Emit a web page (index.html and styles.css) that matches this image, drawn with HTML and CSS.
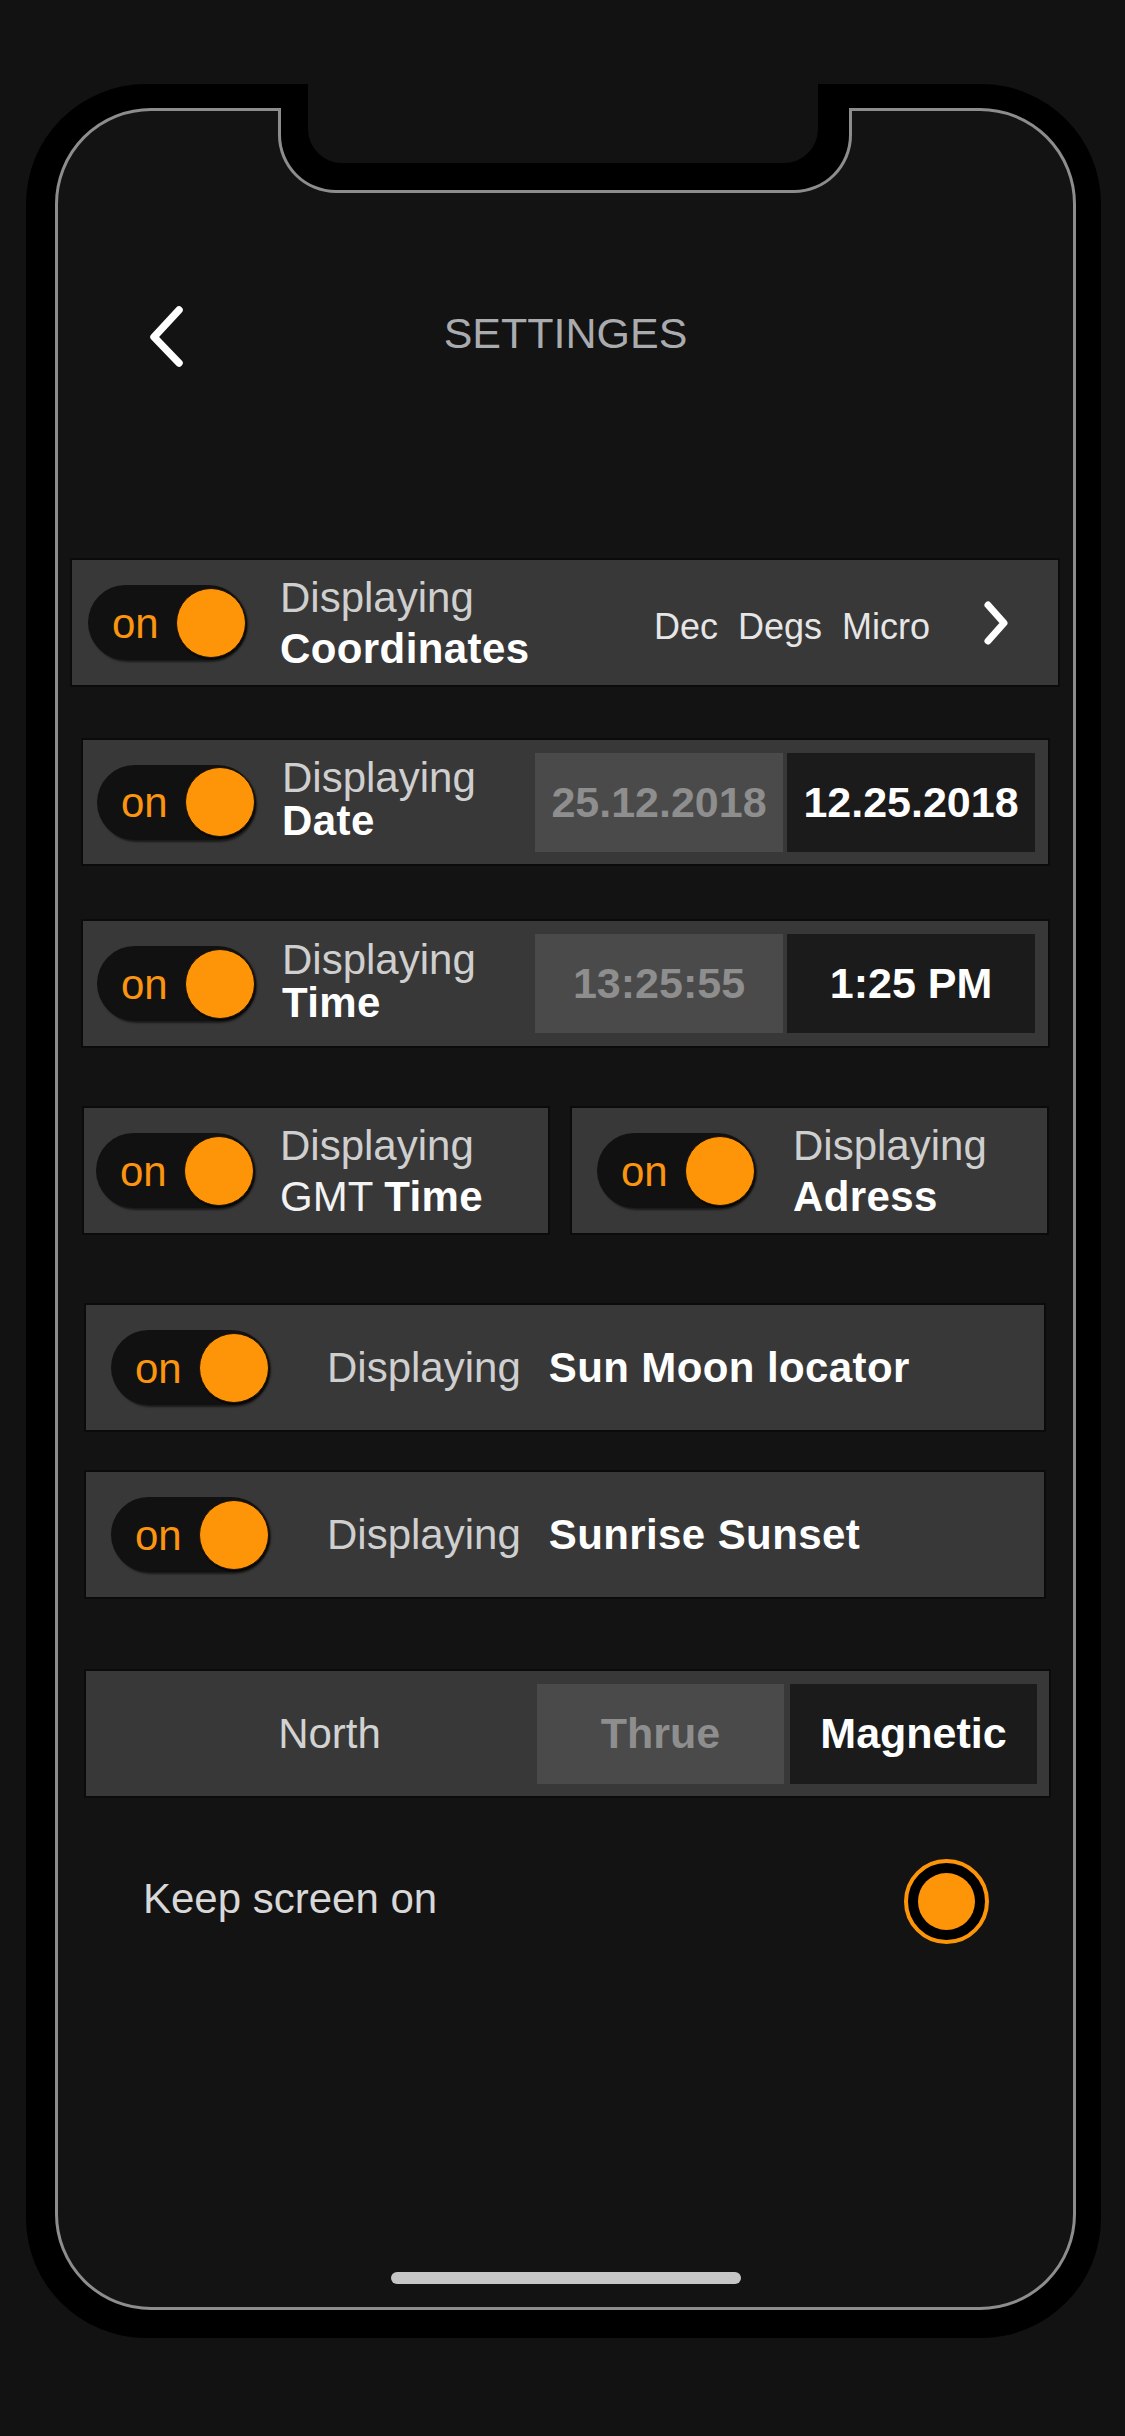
FILE: index.html
```html
<!DOCTYPE html>
<html lang="en">
<head>
<meta charset="utf-8">
<title>Settinges</title>
<link rel="stylesheet" href="styles.css">
</head>
<body>
<div class="device">
  <div class="screen">
    <div class="notch"><div class="notch-cut"></div></div>

    <header class="header">
      <svg class="back" width="40" height="64" viewBox="0 0 40 64" aria-label="Back">
        <path d="M34 6 L9 33 L34 59" fill="none" stroke="#ffffff" stroke-width="7.5" stroke-linecap="round" stroke-linejoin="round"/>
      </svg>
      <h1 class="title">SETTINGES</h1>
      <span></span>
    </header>

    <div class="card row-coords">
      <div class="toggle"><span class="on">on</span><span class="knob"></span></div>
      <div class="label label-tall lbl-coords"><span class="light">Displaying</span><span class="bold">Coordinates</span></div>
      <div class="units"><span>Dec</span><span>Degs</span><span>Micro</span></div>
      <svg class="chev" width="30" height="46" viewBox="0 0 30 46" aria-label="More">
        <path d="M7 5 L23 23 L7 41" fill="none" stroke="#ffffff" stroke-width="7" stroke-linecap="round" stroke-linejoin="round"/>
      </svg>
    </div>

    <div class="card row-date">
      <div class="toggle"><span class="on">on</span><span class="knob"></span></div>
      <div class="label label-short lbl-date"><span class="light">Displaying</span><span class="bold">Date</span></div>
      <div class="segs">
        <div class="seg seg-dim">25.12.2018</div>
        <div class="seg seg-on">12.25.2018</div>
      </div>
    </div>

    <div class="card row-time">
      <div class="toggle"><span class="on">on</span><span class="knob"></span></div>
      <div class="label label-short lbl-date"><span class="light">Displaying</span><span class="bold">Time</span></div>
      <div class="segs">
        <div class="seg seg-dim">13:25:55</div>
        <div class="seg seg-on">1:25 PM</div>
      </div>
    </div>

    <div class="pair">
      <div class="card row-gmt">
        <div class="toggle"><span class="on">on</span><span class="knob"></span></div>
        <div class="label label-tall lbl-gmt"><span class="light">Displaying</span><span class="white">GMT <b class="bold">Time</b></span></div>
      </div>
      <div class="card row-addr">
        <div class="toggle"><span class="on">on</span><span class="knob"></span></div>
        <div class="label label-tall lbl-addr"><span class="light">Displaying</span><span class="bold">Adress</span></div>
      </div>
    </div>

    <div class="card row-wide row-sun">
      <div class="toggle"><span class="on">on</span><span class="knob"></span></div>
      <div class="inline-label"><span class="light">Displaying</span><span class="bold">Sun Moon locator</span></div>
    </div>

    <div class="card row-wide row-rise">
      <div class="toggle"><span class="on">on</span><span class="knob"></span></div>
      <div class="inline-label"><span class="light">Displaying</span><span class="bold">Sunrise Sunset</span></div>
    </div>

    <div class="card row-north">
      <div class="north">North</div>
      <div class="segs segs-north">
        <div class="seg seg-dim">Thrue</div>
        <div class="seg seg-on">Magnetic</div>
      </div>
    </div>

    <div class="keep">
      <span class="keep-text">Keep screen on</span>
      <span class="radio"><span class="radio-dot"></span></span>
    </div>

    <div class="home"></div>
  </div>
</div>
</body>
</html>
```

FILE: styles.css
```css
* {
  box-sizing: border-box;
}

body {
  margin: 0;
  width: 1125px;
  height: 2436px;
  overflow: hidden;
  background: #121212;
  font-family: "Liberation Sans", Arial, Helvetica, sans-serif;
}

/* ---------- device frame ---------- */
.device {
  margin: 84px 0 0 26px;
  width: 1075px;
  height: 2254px;
  background: #000;
  border-radius: 120px;
  padding: 24px 25px 28px 29px;
}

.screen {
  position: relative;
  height: 100%;
  border: 3px solid #8d8d8d;
  border-radius: 96px;
  background: #131313;
  display: flex;
  flex-direction: column;
}

.notch {
  position: absolute;
  left: 220px;
  top: -3px;
  width: 574px;
  height: 85px;
  background: #000;
  border: 3px solid #8d8d8d;
  border-top: 0;
  border-radius: 0 0 58px 58px;
}

.notch-cut {
  position: absolute;
  left: 27px;
  top: -24px;
  width: 510px;
  height: 79px;
  background: #121212;
  border-radius: 0 0 34px 34px;
}

/* ---------- header ---------- */
.header {
  display: grid;
  grid-template-columns: 1fr auto 1fr;
  align-items: center;
  height: 64px;
  margin-top: 193px;
  flex-shrink: 0;
}

.back {
  display: block;
  margin-left: 87px;
}

.title {
  margin: 0 0 6px;
  font-size: 43px;
  font-weight: 400;
  color: #a9abae;
  line-height: normal;
}

/* ---------- cards ---------- */
.card {
  display: flex;
  align-items: center;
  height: 125px;
  background: #383838;
  box-shadow: 0 0 0 2px #0b0b0b;
  flex-shrink: 0;
}

.toggle {
  width: 158px;
  height: 75px;
  flex-shrink: 0;
  border-radius: 38px;
  background: #111;
  box-shadow: 2px 2px 2px rgba(0, 0, 0, 0.55);
  display: flex;
  align-items: center;
  justify-content: space-between;
  padding: 0 0 0 24px;
}

.on {
  color: #fb950f;
  font-size: 42px;
  line-height: 1;
  padding-top: 2px;
}

.knob {
  width: 70px;
  height: 70px;
  border-radius: 50%;
  background: #fe9508;
  border: 1.5px solid #1c1205;
  box-shadow: 1px 2px 1px rgba(0, 0, 0, 0.6);
}

.label {
  display: flex;
  flex-direction: column;
  font-size: 42px;
}

.label-tall {
  line-height: 51px;
}

.label-short {
  line-height: 43px;
  padding-bottom: 6px;
}

.light {
  color: #cfcfcf;
}

.white {
  color: #f2f2f2;
}

.bold {
  color: #fff;
  font-weight: 700;
  letter-spacing: 0.4px;
}

/* row 1 */
.row-coords {
  margin: 192px 0 0 14px;
  width: 986px;
  padding-left: 16px;
}

.lbl-coords {
  margin-left: 34px;
}

.units {
  display: flex;
  gap: 20px;
  margin-left: auto;
  padding-top: 8px;
  font-size: 36px;
  color: #e6e6e6;
}

.chev {
  display: block;
  margin: 0 47px 0 51px;
}

/* rows 2,3 */
.row-date {
  margin: 55px 0 0 25px;
  width: 965px;
  height: 124px;
  padding: 0 13px 0 14px;
}

.row-time {
  margin: 57px 0 0 25px;
  width: 965px;
  padding: 0 13px 0 14px;
}

.lbl-date {
  margin-left: 27px;
}

.segs {
  display: flex;
  gap: 4px;
  margin-left: auto;
  height: 99px;
}

.seg {
  width: 248px;
  display: flex;
  align-items: center;
  justify-content: center;
  font-size: 43px;
  font-weight: 700;
}

.seg-dim {
  background: #4a4a4a;
  color: #8e8e8e;
}

.seg-on {
  background: #1b1b1b;
  color: #fff;
}

/* row 4 */
.pair {
  display: grid;
  grid-template-columns: 464px 475px;
  gap: 24px;
  margin: 62px 0 0 26px;
  flex-shrink: 0;
}

.row-gmt {
  padding-left: 12px;
}

.lbl-gmt {
  margin-left: 26px;
}

.row-addr {
  padding-left: 25px;
}

.lbl-addr {
  margin-left: 38px;
}

/* rows 5,6 */
.row-wide {
  margin-left: 28px;
  width: 958px;
  padding-left: 25px;
}

.row-sun {
  margin-top: 72px;
}

.row-rise {
  margin-top: 42px;
}

.inline-label {
  display: flex;
  align-items: baseline;
  gap: 28px;
  margin-left: 58px;
  font-size: 42px;
}

/* row 7 */
.row-north {
  margin: 74px 0 0 28px;
  width: 963px;
  padding-right: 12px;
}

.north {
  flex: 1;
  text-align: center;
  padding-left: 36px;
  font-size: 42px;
  color: #d2d2d2;
}

.segs-north {
  gap: 6px;
  height: 100px;
}

.segs-north .seg {
  width: 247px;
}

/* keep screen on */
.keep {
  display: flex;
  align-items: center;
  justify-content: space-between;
  margin: 62px 0 0 85px;
  width: 846px;
  height: 87px;
  flex-shrink: 0;
}

.keep-text {
  font-size: 42px;
  color: #d8d8d8;
  padding-bottom: 5px;
}

.radio {
  width: 85px;
  height: 85px;
  border-radius: 50%;
  border: 4px solid #fe9508;
  background: #000;
  display: flex;
  align-items: center;
  justify-content: center;
}

.radio-dot {
  width: 57px;
  height: 57px;
  border-radius: 50%;
  background: #fe9508;
}

/* home indicator */
.home {
  margin: auto auto 23px;
  width: 350px;
  height: 12px;
  border-radius: 6px;
  background: #c6c6c6;
  flex-shrink: 0;
}
```
